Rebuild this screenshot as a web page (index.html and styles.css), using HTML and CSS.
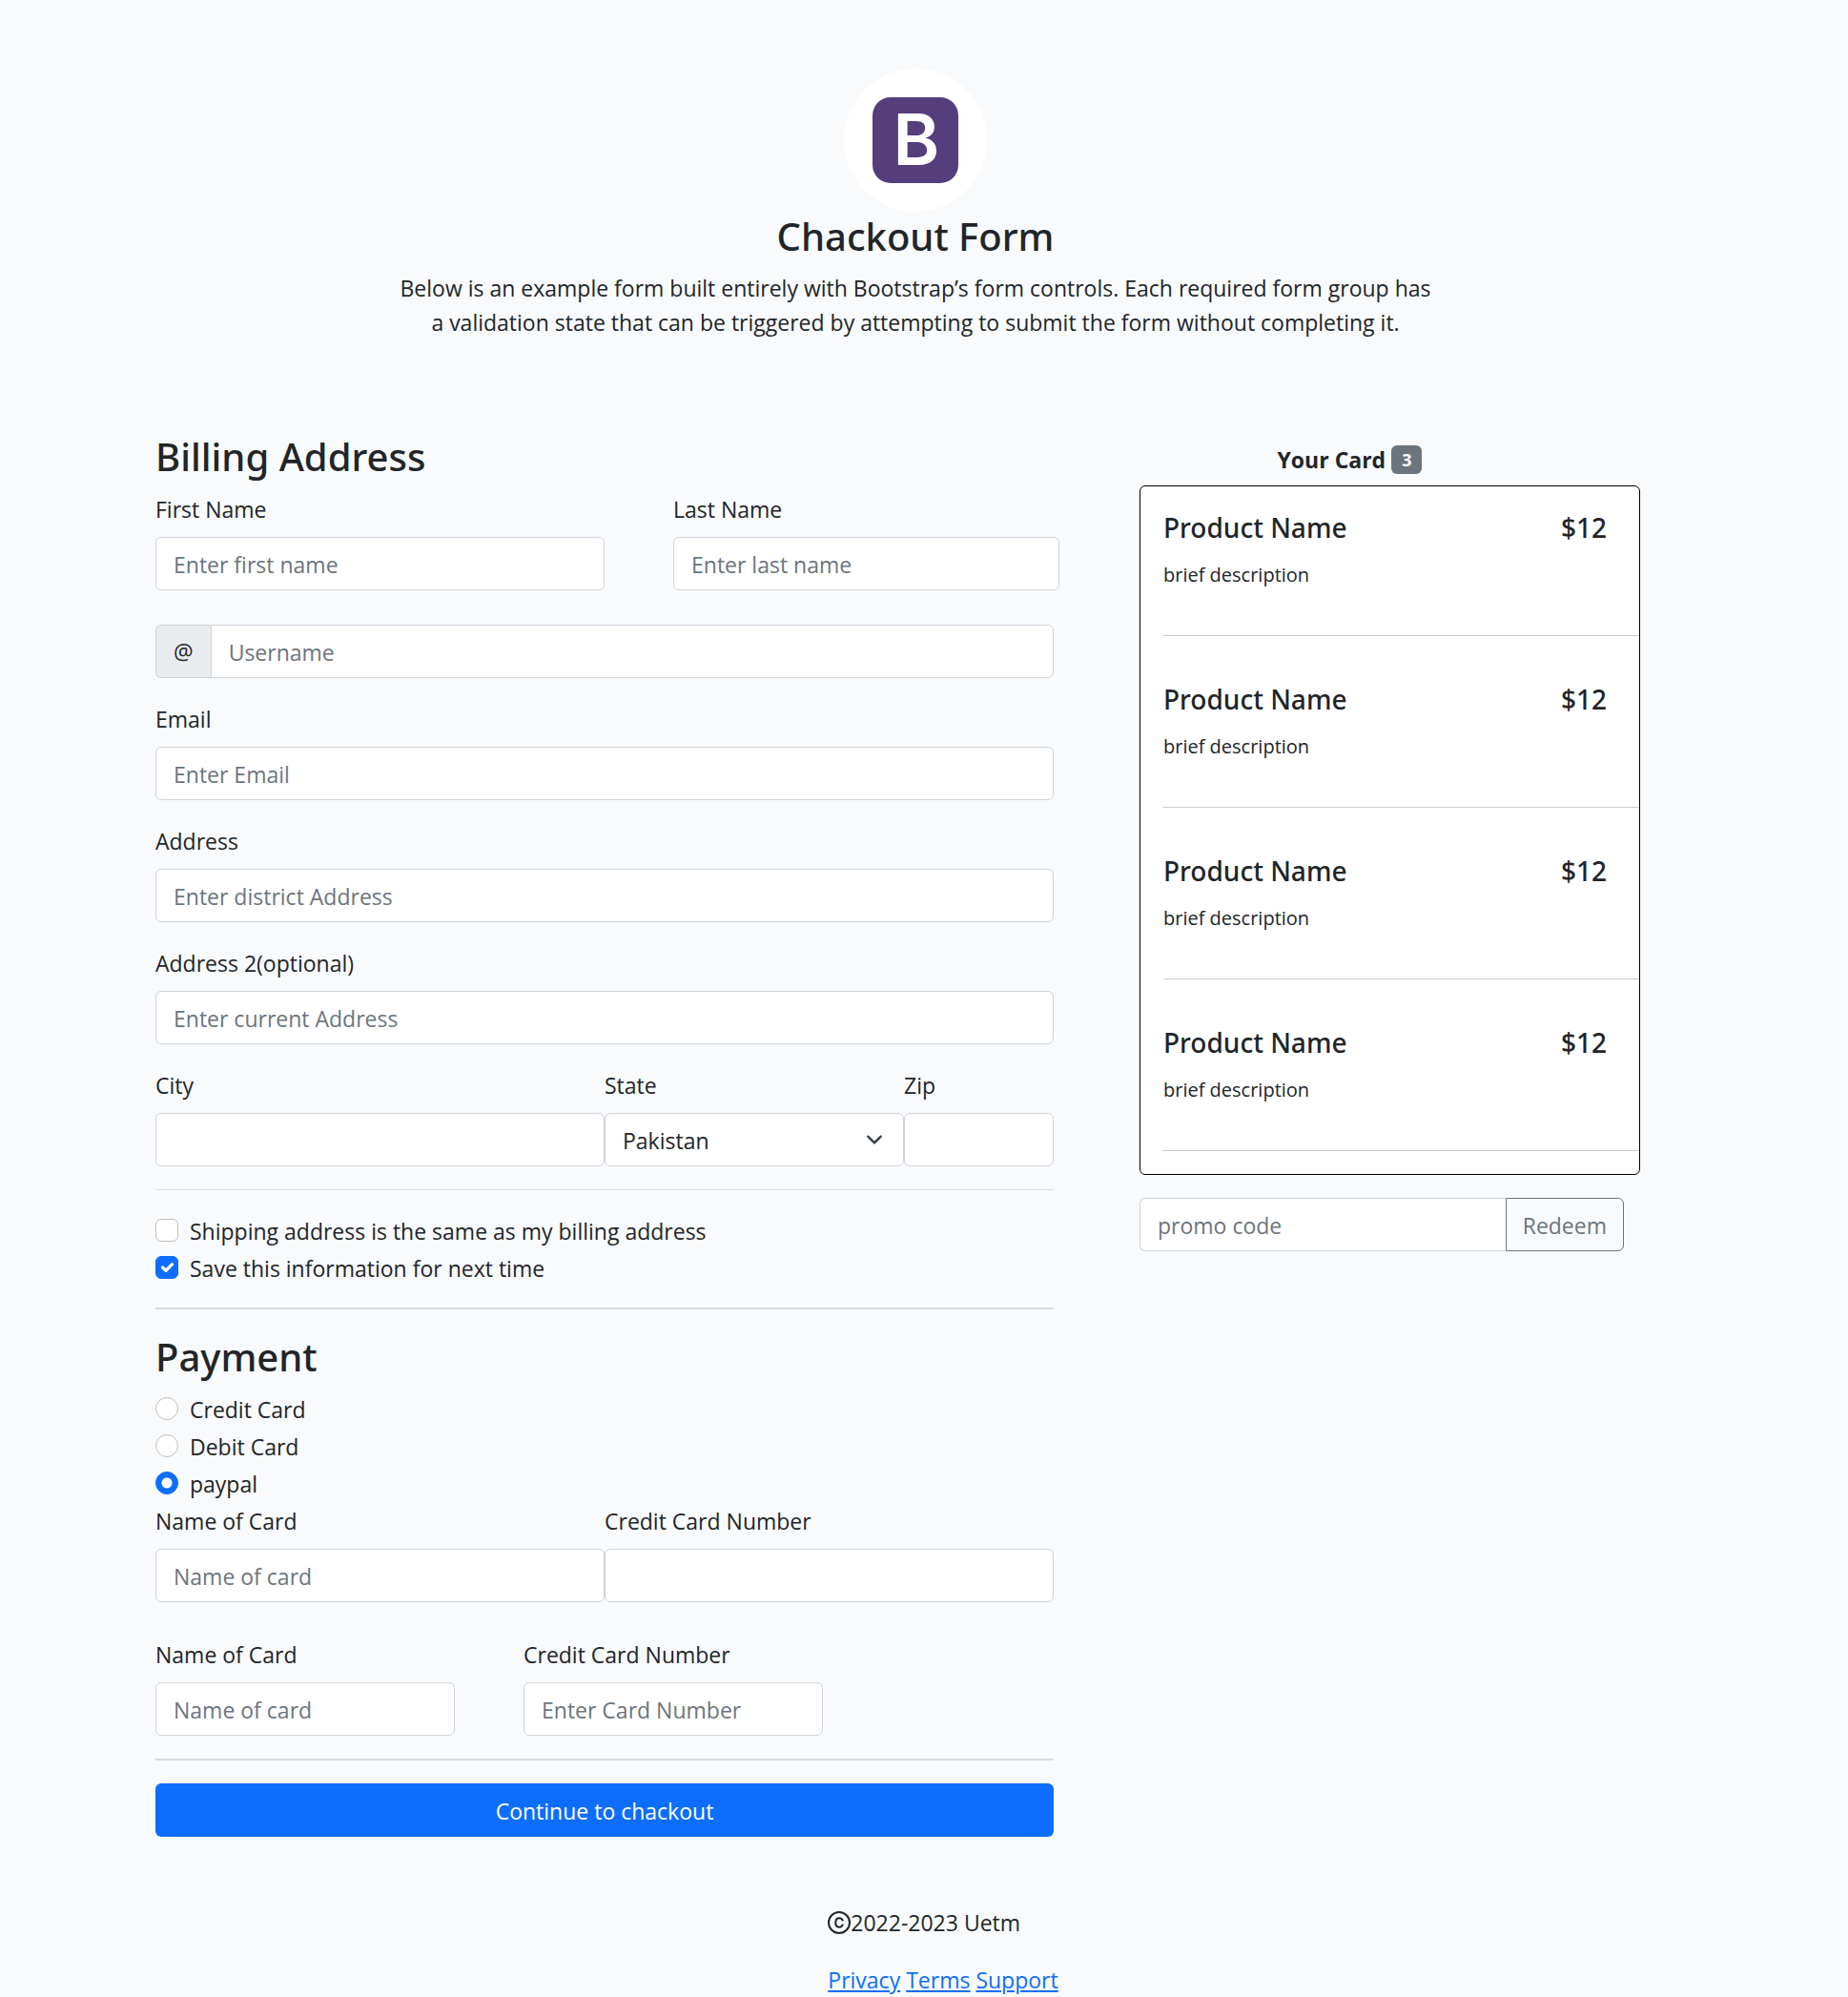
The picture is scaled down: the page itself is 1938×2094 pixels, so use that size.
FILE: index.html
```html
<!DOCTYPE html>
<html lang="en">
<head>
<meta charset="utf-8">
<meta name="viewport" content="width=device-width, initial-scale=1">
<title>Chackout Form</title>
<link rel="stylesheet" href="styles.css">
</head>
<body>
<header class="intro">
  <svg class="logo" viewBox="0 0 150 150" role="img" aria-label="Bootstrap">
    <circle cx="75" cy="75" r="75" fill="#fff"/>
    <rect x="30" y="30" width="90" height="90" rx="19" fill="#563d7c"/>
    <text class="logo-letter" x="76" y="101" text-anchor="middle">B</text>
  </svg>
  <h1 class="title">Chackout Form</h1>
  <p class="lead">Below is an example form built entirely with Bootstrap’s form controls. Each required form group has<br>a validation state that can be triggered by attempting to submit the form without completing it.</p>
</header>

<main class="layout">
  <form class="billing">
    <h2 class="title">Billing Address</h2>
    <div class="row row-names">
      <div class="field"><label for="first">First Name</label><input class="control" id="first" type="text" placeholder="Enter first name"></div>
      <div class="field"><label for="last">Last Name</label><input class="control" id="last" type="text" placeholder="Enter last name"></div>
    </div>
    <div class="input-group username">
      <label class="addon" for="user">@</label>
      <input class="control" id="user" type="text" placeholder="Username">
    </div>
    <div class="field"><label for="email">Email</label><input class="control" id="email" type="email" placeholder="Enter Email"></div>
    <div class="field"><label for="address">Address</label><input class="control" id="address" type="text" placeholder="Enter district Address"></div>
    <div class="field"><label for="address2">Address 2(optional)</label><input class="control" id="address2" type="text" placeholder="Enter current Address"></div>
    <div class="row row-place">
      <div class="field"><label for="city">City</label><input class="control" id="city" type="text"></div>
      <div class="field"><label for="state">State</label><select class="control select" id="state"><option>Pakistan</option></select></div>
      <div class="field"><label for="zip">Zip</label><input class="control" id="zip" type="text"></div>
    </div>
    <hr class="rule">
    <div class="checks">
      <div class="check"><input type="checkbox" id="same"><label for="same">Shipping address is the same as my billing address</label></div>
      <div class="check"><input type="checkbox" id="save" checked><label for="save">Save this information for next time</label></div>
    </div>
    <hr class="rule rule-thick">
    <h2 class="title">Payment</h2>
    <div class="check"><input type="radio" name="method" id="credit"><label for="credit">Credit Card</label></div>
    <div class="check"><input type="radio" name="method" id="debit"><label for="debit">Debit Card</label></div>
    <div class="check"><input type="radio" name="method" id="paypal" checked><label for="paypal">paypal</label></div>
    <div class="row row-half">
      <div class="field"><label for="card-name">Name of Card</label><input class="control" id="card-name" type="text" placeholder="Name of card"></div>
      <div class="field"><label for="card-number">Credit Card Number</label><input class="control" id="card-number" type="text"></div>
    </div>
    <div class="row row-third">
      <div class="field"><label for="card-name2">Name of Card</label><input class="control" id="card-name2" type="text" placeholder="Name of card"></div>
      <div class="field"><label for="card-number2">Credit Card Number</label><input class="control" id="card-number2" type="text" placeholder="Enter Card Number"></div>
    </div>
    <hr class="rule rule-thick">
    <button class="submit" type="submit">Continue to chackout</button>
  </form>

  <aside class="cart">
    <h2 class="cart-title">Your Card <span class="badge">3</span></h2>
    <ul class="products">
      <li class="product"><div class="product-line"><h3>Product Name</h3><span>$12</span></div><p>brief description</p></li>
      <li class="product"><div class="product-line"><h3>Product Name</h3><span>$12</span></div><p>brief description</p></li>
      <li class="product"><div class="product-line"><h3>Product Name</h3><span>$12</span></div><p>brief description</p></li>
      <li class="product"><div class="product-line"><h3>Product Name</h3><span>$12</span></div><p>brief description</p></li>
    </ul>
    <form class="input-group promo">
      <input class="control" type="text" placeholder="promo code" aria-label="promo code">
      <button class="redeem" type="submit">Redeem</button>
    </form>
  </aside>
</main>

<footer class="footer">
  <div class="footer-inner">
    <p class="copyright"><svg class="c-icon" viewBox="0 0 24 24" aria-hidden="true"><circle cx="12" cy="12" r="11"/><path d="M16 10.200A4 4.600 0 0 0 12.200 7.200C9.800 7.200 8.300 9 8.300 12S9.800 16.800 12.200 16.800A4 4.600 0 0 0 16 13.800"/></svg>2022-2023 Uetm</p>
    <nav><a href="#privacy">Privacy</a> <a href="#terms">Terms</a> <a href="#support">Support</a></nav>
  </div>
</footer>
</body>
</html>
```
FILE: styles.css
```css
:root {
  --ink: #212529;
  --muted: #6c757d;
  --line: #ced4da;
  --blue: #0d6efd;
}

* { box-sizing: border-box; }

body {
  margin: 0;
  padding: 72px 18px 0 0;
  background: #f8fafc;
  color: var(--ink);
  font: 23px/36px "Open Sans", "Noto Sans", sans-serif;
}

h1, h2, h3, p, ul { margin: 0; padding: 0; }

input, select, button { font: inherit; color: inherit; }

.title {
  margin-bottom: 10px;
  font-family: "Noto Sans", "Open Sans", sans-serif;
  font-size: 40px;
  line-height: 52px;
  font-weight: 500;
}

/* Header */
.intro { text-align: center; }
.logo { display: block; width: 150px; height: 150px; margin: 0 auto; }
.logo-letter { font: 600 74px Inter, "Liberation Sans", sans-serif; fill: #fff; }

/* Columns */
.layout {
  display: grid;
  grid-template-columns: 942fr 525fr;
  gap: 90px;
  align-items: start;
  max-width: 1594px;
  margin: 97px auto 0;
  padding-right: 37px;
}

/* Form */
.field { display: flex; flex-direction: column; gap: 10px; min-width: 0; }
.field label, .check label { line-height: 38px; }
.billing > .field, .billing > .row { margin-bottom: 24px; }

.control {
  width: 100%;
  height: 56px;
  padding: 2px 18px 0;
  border: 1px solid var(--line);
  border-radius: 6px;
  background-color: #fff;
}
.control::placeholder { color: var(--muted); opacity: 1; }

.select {
  appearance: none;
  background: #fff url("data:image/svg+xml,%3Csvg xmlns='http://www.w3.org/2000/svg' viewBox='0 0 16 16'%3E%3Cpath fill='none' stroke='%23343a40' stroke-linecap='round' stroke-linejoin='round' stroke-width='2' d='m2 5 6 6 6-6'/%3E%3C/svg%3E") no-repeat right 18px center / 24px 18px;
}

.row { display: grid; }
.row-names { grid-template-columns: 50% 43%; column-gap: 72px; }
.row-place { grid-template-columns: 6fr 4fr 2fr; }
.row-half { grid-template-columns: 1fr 1fr; }
.row-third { grid-template-columns: 314fr 314fr 170fr; column-gap: 72px; }
.billing > .row-names, .billing > .row-half { margin-bottom: 36px; }
.billing > .row-place, .billing > .row-third { margin-bottom: 0; }

.input-group { display: flex; }
.input-group .control { flex: 1; min-width: 0; }
.username { margin-bottom: 24px; }
.username .control { border-radius: 0 6px 6px 0; }
.addon {
  display: flex;
  align-items: center;
  padding: 0 18px;
  border: 1px solid var(--line);
  border-right: 0;
  border-radius: 6px 0 0 6px;
  background: #e9ecef;
}

.rule { height: 1px; margin: 24px 0; border: 0; background: currentColor; opacity: .25; }
.rule-thick { height: 2px; }

.checks { margin-bottom: 22px; }
.check { display: flex; gap: 12px; height: 36px; margin-bottom: 3px; }
.check input {
  appearance: none;
  flex: none;
  width: 24px;
  height: 24px;
  margin: 6px 0 0;
  border: 1px solid #bfbfbf;
  border-radius: 6px;
  background: #fff center / contain no-repeat;
}
.check input[type="radio"] { border-radius: 50%; }
.check input:checked { border-color: var(--blue); background-color: var(--blue); }
.check input[type="checkbox"]:checked {
  background-image: url("data:image/svg+xml,%3Csvg xmlns='http://www.w3.org/2000/svg' viewBox='0 0 20 20'%3E%3Cpath fill='none' stroke='%23fff' stroke-linecap='round' stroke-linejoin='round' stroke-width='3' d='m6 10 3 3 6-6'/%3E%3C/svg%3E");
}
.check input[type="radio"]:checked {
  background-image: radial-gradient(circle, #fff 5px, transparent 6px);
}

.submit {
  display: block;
  width: 100%;
  height: 56px;
  padding: 2px 18px 0;
  border: 0;
  border-radius: 6px;
  background: var(--blue);
  color: #fff;
}

/* Cart */
.cart-title {
  display: flex;
  justify-content: center;
  align-items: center;
  gap: 6px;
  padding: 14px 84px 12px 0;
  font-size: 23px;
  line-height: 30px;
  font-weight: 700;
}
.badge {
  padding: 0 11px;
  border-radius: 6px;
  background: var(--muted);
  color: #fff;
  font-size: 18px;
}
.products {
  list-style: none;
  padding: 0 0 24px 24px;
  border: 1px solid #000;
  border-radius: 6px;
  background: #fff;
}
.product {
  height: 180px;
  padding: 48px 34px 0 0;
  border-bottom: 1px solid #c8c9ca;
}
.product:first-child { height: 157px; padding-top: 25px; }
.product-line {
  display: flex;
  justify-content: space-between;
  margin-bottom: 16px;
  font-family: "Noto Sans", "Open Sans", sans-serif;
  font-size: 28px;
  line-height: 36px;
  font-weight: 500;
}
.product h3 { font: inherit; }
.product p { font-size: 20px; line-height: 32px; }

.promo { margin: 24px 17px 0 0; }
.promo .control { border-right: 0; border-radius: 6px 0 0 6px; }
.redeem {
  padding: 2px 17px 0;
  border: 1px solid var(--muted);
  border-radius: 0 6px 6px 0;
  background: transparent;
  color: var(--muted);
}

/* Footer */
.footer { display: flex; justify-content: center; margin-top: 72px; padding: 0 0 8px 58px; }
.copyright { display: flex; align-items: center; margin-bottom: 24px; }
.c-icon { width: 24px; height: 24px; fill: none; stroke: currentColor; stroke-width: 2; }
.footer a { color: var(--blue); }
```
